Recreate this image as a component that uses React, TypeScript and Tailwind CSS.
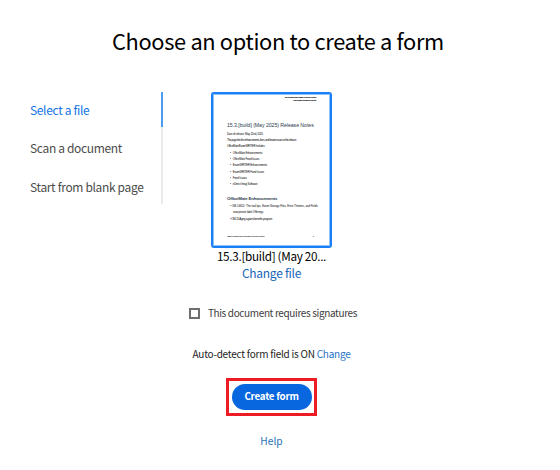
const steps = ["Select a file", "Scan a document", "Start from blank page"]

const topics = [
	"OfficeMate Enhancements",
	"OfficeMate Fixed Issues",
	"ExamWRITER Enhancements",
	"ExamWRITER Fixed Issues",
	"Fixed Issues",
	"eDirect Imag Software",
]

function Sidebar() {
	return (
		<nav className="flex h-[112px] w-[133px] shrink-0 justify-between">
			<ul className="-mt-[1px] text-[12px] leading-[38.4px] tracking-[-0.34px] whitespace-nowrap text-[#4b4b4b]">
				{steps.map((step, i) => (
					<li key={step} className={i === 0 ? "text-[#1473e6]" : ""}>
						{step}
					</li>
				))}
			</ul>
			<div className="w-[2px] bg-[#eaeaea]">
				<div className="h-[35px] bg-[#4b9cf5]" />
			</div>
		</nav>
	)
}

function Thumbnail() {
	return (
		<div className="flex h-[156px] w-[121px] flex-col overflow-hidden rounded-[3px] border-2 border-[#1b7ff5] bg-white pt-[1px] pr-[4px] pl-[14px] font-['Liberation_Sans',Arial,sans-serif] text-[2.8px] leading-[4px] whitespace-nowrap text-black inset-shadow-[0_0_0_1px_#8fc2fb]">
			<div className="mt-[1px] pr-[10px] text-right text-[2.5px] leading-[3px] font-bold tracking-[-0.35px]">
				<p>15.3 [build] (May 2025) Release Notes</p>
				<p>OfficeMate Enhancements</p>
			</div>
			<h2 className="mt-[19px] text-[5.2px] leading-[8px] tracking-[-0.05px] text-[#2c3b4d]">
				15.3.[build] (May 2025) Release Notes
			</h2>
			<p className="mt-[3px] tracking-[-0.15px]">Date of release: May 22nd, 2025</p>
			<p className="mt-[2px] tracking-[-0.3px]">
				This page lists the enhancements, fixes, and known issues in this release:
			</p>
			<p className="mt-[2px] tracking-[-0.2px]">OfficeMate/ExamWRITER Includes</p>
			<ul className="mt-[2px] pl-[3px] tracking-[-0.15px]">
				{topics.map((topic) => (
					<li key={topic} className="flex h-[6.2px] items-center gap-[2px]">
						<span>•</span>
						{topic}
					</li>
				))}
			</ul>
			<h3 className="mt-[9px] text-[4.3px] leading-[6px] font-bold tracking-[-0.15px] text-[#2c3b4d]">
				OfficeMate Enhancements
			</h3>
			<div className="mt-[1px] pl-[3px] leading-[6.2px]">
				<p className="tracking-[-0.04px]">
					• OM-14652: The tool tips, Exam Storage Files, Error Themes, and Fields
				</p>
				<p className="pl-[3px] tracking-[-0.1px]">now private label Offerings</p>
				<p className="tracking-[-0.2px]">• OM-15 Aging against benefits program</p>
			</div>
			<footer className="mt-[13px] flex justify-between pr-[12px] text-[2.5px] leading-[3px] tracking-[-0.25px]">
				<span>OfficeMate/ExamWRITER Release Notes</span>
				<span>1</span>
			</footer>
		</div>
	)
}

export default function App() {
	return (
		<main className="h-[470px] w-[560px] overflow-hidden bg-white font-['Noto_Sans_CJK_SC',sans-serif] text-black">
			<h1 className="pt-[26px] pl-[112px] text-[21.8px] leading-[30px] tracking-[-0.33px] whitespace-nowrap">
				Choose an option to create a form
			</h1>
			<div className="mt-[36px] flex pl-[30px]">
				<Sidebar />
				<section className="ml-[8px] flex w-[201px] flex-col items-center whitespace-nowrap">
					<Thumbnail />
					<p className="-mt-[1px] text-[11.7px] leading-[17px] tracking-[-0.3px]">
						15.3.[build] (May 20...
					</p>
					<a className="text-[12px] leading-[17px] tracking-[-0.28px] text-[#1766b8]">Change file</a>
					<label className="mt-[24px] ml-[3px] flex items-center gap-[8px] text-[10px] leading-[16px] tracking-[-0.36px] text-[#3c3c3c]">
						<span className="size-[11px] border-2 border-[#6e6e6e]" />
						This document requires signatures
					</label>
					<p className="mt-[25px] text-[10px] leading-[16px] tracking-[-0.24px] text-[#222]">
						Auto-detect form field is ON <a className="text-[#2873c4]">Change</a>
					</p>
					<div className="mt-[16px] flex h-[38px] w-[91px] items-center justify-center border-[3px] border-[#ed1c24]">
						<button className="h-[26px] w-[80px] rounded-full bg-[#0866df] pb-[1px] text-[9.8px] font-bold tracking-[-0.25px] text-white">
							Create form
						</button>
					</div>
					<a className="mt-[17px] text-[10.2px] leading-[16px] text-[#2873b8]">Help</a>
				</section>
			</div>
		</main>
	)
}
